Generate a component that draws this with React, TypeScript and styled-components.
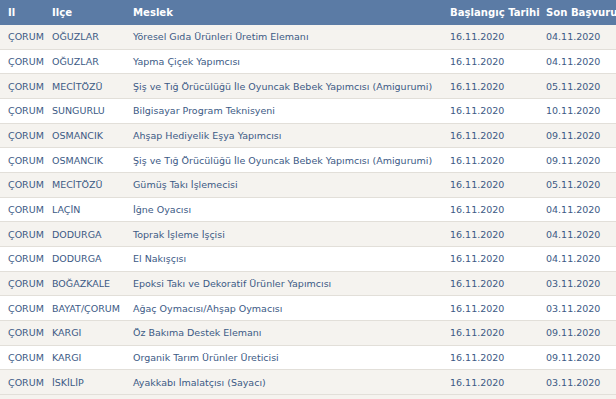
import React from "react";
import styled, { createGlobalStyle } from "styled-components";

const GlobalStyle = createGlobalStyle`
  html, body {
    margin: 0;
    padding: 0;
    background: #ffffff;
    overflow: hidden;
  }
`;

type Row = {
  il: string;
  ilce: string;
  meslek: string;
  baslangic: string;
  son: string;
};

const rows: Row[] = [
  { il: "ÇORUM", ilce: "OĞUZLAR", meslek: "Yöresel Gıda Ürünleri Üretim Elemanı", baslangic: "16.11.2020", son: "04.11.2020" },
  { il: "ÇORUM", ilce: "OĞUZLAR", meslek: "Yapma Çiçek Yapımcısı", baslangic: "16.11.2020", son: "04.11.2020" },
  { il: "ÇORUM", ilce: "MECİTÖZÜ", meslek: "Şiş ve Tığ Örücülüğü İle Oyuncak Bebek Yapımcısı (Amigurumi)", baslangic: "16.11.2020", son: "05.11.2020" },
  { il: "ÇORUM", ilce: "SUNGURLU", meslek: "Bilgisayar Program Teknisyeni", baslangic: "16.11.2020", son: "10.11.2020" },
  { il: "ÇORUM", ilce: "OSMANCIK", meslek: "Ahşap Hediyelik Eşya Yapımcısı", baslangic: "16.11.2020", son: "09.11.2020" },
  { il: "ÇORUM", ilce: "OSMANCIK", meslek: "Şiş ve Tığ Örücülüğü İle Oyuncak Bebek Yapımcısı (Amigurumi)", baslangic: "16.11.2020", son: "09.11.2020" },
  { il: "ÇORUM", ilce: "MECİTÖZÜ", meslek: "Gümüş Takı İşlemecisi", baslangic: "16.11.2020", son: "05.11.2020" },
  { il: "ÇORUM", ilce: "LAÇİN", meslek: "İğne Oyacısı", baslangic: "16.11.2020", son: "04.11.2020" },
  { il: "ÇORUM", ilce: "DODURGA", meslek: "Toprak İşleme İşçisi", baslangic: "16.11.2020", son: "04.11.2020" },
  { il: "ÇORUM", ilce: "DODURGA", meslek: "El Nakışçısı", baslangic: "16.11.2020", son: "04.11.2020" },
  { il: "ÇORUM", ilce: "BOĞAZKALE", meslek: "Epoksi Takı ve Dekoratif Ürünler Yapımcısı", baslangic: "16.11.2020", son: "03.11.2020" },
  { il: "ÇORUM", ilce: "BAYAT/ÇORUM", meslek: "Ağaç Oymacısı/Ahşap Oymacısı", baslangic: "16.11.2020", son: "03.11.2020" },
  { il: "ÇORUM", ilce: "KARGI", meslek: "Öz Bakıma Destek Elemanı", baslangic: "16.11.2020", son: "09.11.2020" },
  { il: "ÇORUM", ilce: "KARGI", meslek: "Organik Tarım Ürünler Üreticisi", baslangic: "16.11.2020", son: "09.11.2020" },
  { il: "ÇORUM", ilce: "İSKİLİP", meslek: "Ayakkabı İmalatçısı (Sayacı)", baslangic: "16.11.2020", son: "03.11.2020" },
];

// full column widths, padding included
const columns = [44, 81, 317, 96, 130];

const Table = styled.table`
  border-collapse: collapse;
  table-layout: fixed;
  width: ${columns.reduce((a, b) => a + b, 0)}px;
  font-family: "DejaVu Sans", Verdana, sans-serif;
  font-size: 9.5px;
`;

const HeadCell = styled.th`
  height: 25px;
  padding: 0 0 0 8px;
  background: #5b7ba5;
  color: #ffffff;
  font-size: 10.1px;
  font-weight: bold;
  text-align: left;
  white-space: nowrap;
`;

const BodyRow = styled.tr<{ $odd: boolean }>`
  background: ${(p) => (p.$odd ? "#f5f3ef" : "#ffffff")};
  border-bottom: 1px solid #e2dfd9;
`;

const Cell = styled.td`
  height: 23.67px;
  padding: 0 0 0 8px;
  color: #3c5a85;
  white-space: nowrap;
  overflow: hidden;
`;

export default function App() {
  return (
    <>
      <GlobalStyle />
      <Table>
        <colgroup>
          {columns.map((w, i) => (
            <col key={i} style={{ width: w }} />
          ))}
        </colgroup>
        <thead>
          <tr>
            <HeadCell>Il</HeadCell>
            <HeadCell>Ilçe</HeadCell>
            <HeadCell>Meslek</HeadCell>
            <HeadCell>Başlangıç Tarihi</HeadCell>
            <HeadCell>Son Başvuru Tarihi</HeadCell>
          </tr>
        </thead>
        <tbody>
          {rows.map((r, i) => (
            <BodyRow key={i} $odd={i % 2 === 0}>
              <Cell>{r.il}</Cell>
              <Cell>{r.ilce}</Cell>
              <Cell>{r.meslek}</Cell>
              <Cell>{r.baslangic}</Cell>
              <Cell>{r.son}</Cell>
            </BodyRow>
          ))}
          <BodyRow $odd={true}>
            <Cell />
            <Cell />
            <Cell />
            <Cell />
            <Cell />
          </BodyRow>
        </tbody>
      </Table>
    </>
  );
}
